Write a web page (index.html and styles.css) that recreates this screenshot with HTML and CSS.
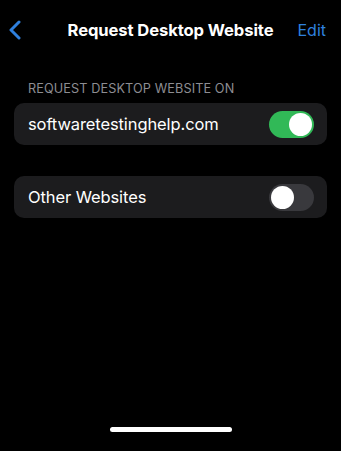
FILE: index.html
```html
<!DOCTYPE html>
<html>
<head>
<meta charset="utf-8">
<link rel="stylesheet" href="styles.css">
</head>
<body>
<div class="screen">
  <div class="navbar">
    <svg class="back" width="12" height="20" viewBox="0 0 12 20"><path d="M10 2 L2 10 L10 18" fill="none" stroke="#2f80de" stroke-width="3" stroke-linecap="round" stroke-linejoin="round"/></svg>
    <div class="title">Request Desktop Website</div>
    <div class="edit">Edit</div>
  </div>
  <div class="section-header">REQUEST DESKTOP WEBSITE ON</div>
  <div class="group">
    <div class="row">
      <span class="label">softwaretestinghelp.com</span>
      <div class="toggle on"><div class="knob"></div></div>
    </div>
  </div>
  <div class="group second">
    <div class="row">
      <span class="label">Other Websites</span>
      <div class="toggle off"><div class="knob"></div></div>
    </div>
  </div>
  <div class="spacer"></div>
  <div class="home-indicator"></div>
</div>
</body>
</html>
```
FILE: styles.css
```css
html, body {
  margin: 0;
  padding: 0;
  background: #000;
}
.screen {
  width: 341px;
  height: 451px;
  display: flex;
  flex-direction: column;
  font-family: Inter, "Liberation Sans", sans-serif;
  color: #fff;
  overflow: hidden;
}
.navbar {
  height: 40px;
  margin-top: 10px;
  display: grid;
  grid-template-columns: 1fr auto 1fr;
  align-items: center;
  padding: 0 15px 0 9px;
}
.back {
  display: block;
}
.title {
  text-align: center;
  font-weight: 700;
  font-size: 16.6px;
  letter-spacing: -0.1px;
  margin-left: 6px;
}
.edit {
  justify-self: end;
  color: #2f80de;
  font-size: 16px;
}
.section-header {
  margin: 32px 0 0 28px;
  font-size: 12.7px;
  color: #8d8d92;
  letter-spacing: 0.1px;
  height: 14px;
  line-height: 14px;
}
.group {
  margin: 7px 14px 0 14px;
  background: #1c1c1e;
  border-radius: 10px;
}
.group.second {
  margin-top: 31px;
}
.row {
  height: 42px;
  display: flex;
  align-items: center;
  justify-content: space-between;
  padding: 0 13px 0 14px;
}
.label {
  font-size: 16.5px;
  letter-spacing: -0.1px;
}
.toggle {
  width: 45px;
  height: 27px;
  border-radius: 14px;
  position: relative;
}
.toggle.on {
  background: #31b957;
}
.toggle.off {
  background: #39393d;
}
.knob {
  position: absolute;
  top: 2px;
  width: 23px;
  height: 23px;
  border-radius: 50%;
  background: #fff;
}
.toggle.on .knob {
  right: 2px;
}
.toggle.off .knob {
  left: 2px;
}
.spacer {
  flex: 1;
}
.home-indicator {
  width: 122px;
  height: 5px;
  border-radius: 3px;
  background: #fff;
  margin: 0 auto 19px auto;
}
```
